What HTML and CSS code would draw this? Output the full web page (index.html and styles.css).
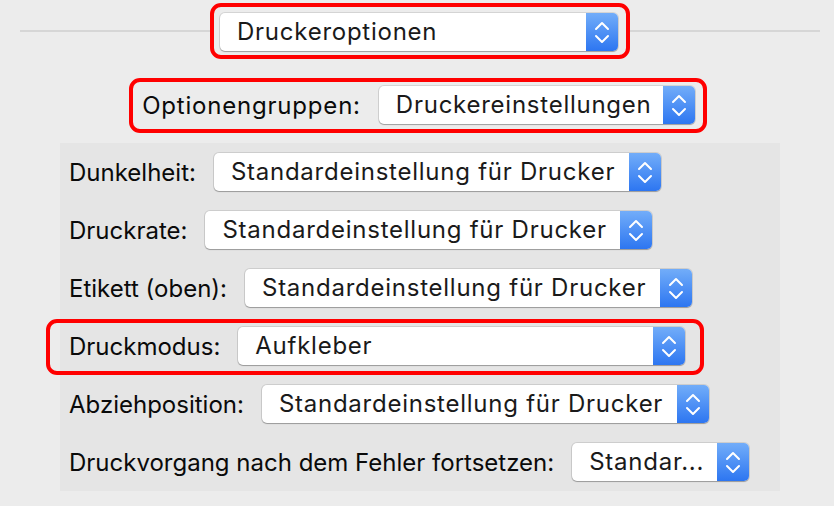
FILE: index.html
```html
<!DOCTYPE html>
<html lang="de">
<head>
    <meta charset="UTF-8">
    <meta name="viewport" content="width=device-width, initial-scale=1.0">
    <title>Druckeroptionen</title>
    <link rel="stylesheet" href="styles.css">
</head>
<body>

    <!-- Section selector over the divider line -->
    <div class="section-bar">
        <div class="marked marked-top">
            <div class="popup popup-section">
                <span class="popup-value">Druckeroptionen</span>
                <span class="popup-arrows"><svg viewBox="0 0 32 38"><polyline points="10,16 16,10 22,16"/><polyline points="10,23 16,29 22,23"/></svg></span>
            </div>
        </div>
    </div>

    <div class="group-row">
        <div class="marked marked-group">
            <span class="label label-group">Optionengruppen:</span>
            <div class="popup popup-group">
                <span class="popup-value">Druckereinstellungen</span>
                <span class="popup-arrows"><svg viewBox="0 0 32 38"><polyline points="10,16 16,10 22,16"/><polyline points="10,23 16,29 22,23"/></svg></span>
            </div>
        </div>
    </div>

    <div class="options-panel">
        <div class="option-row">
            <span class="label">Dunkelheit:</span>
            <div class="popup popup-std">
                <span class="popup-value">Standardeinstellung für Drucker</span>
                <span class="popup-arrows"><svg viewBox="0 0 32 38"><polyline points="10,16 16,10 22,16"/><polyline points="10,23 16,29 22,23"/></svg></span>
            </div>
        </div>

        <div class="option-row">
            <span class="label">Druckrate:</span>
            <div class="popup popup-std">
                <span class="popup-value">Standardeinstellung für Drucker</span>
                <span class="popup-arrows"><svg viewBox="0 0 32 38"><polyline points="10,16 16,10 22,16"/><polyline points="10,23 16,29 22,23"/></svg></span>
            </div>
        </div>

        <div class="option-row">
            <span class="label">Etikett (oben):</span>
            <div class="popup popup-std">
                <span class="popup-value">Standardeinstellung für Drucker</span>
                <span class="popup-arrows"><svg viewBox="0 0 32 38"><polyline points="10,16 16,10 22,16"/><polyline points="10,23 16,29 22,23"/></svg></span>
            </div>
        </div>

        <div class="option-row option-marked">
            <span class="label">Druckmodus:</span>
            <div class="popup popup-std">
                <span class="popup-value">Aufkleber</span>
                <span class="popup-arrows"><svg viewBox="0 0 32 38"><polyline points="10,16 16,10 22,16"/><polyline points="10,23 16,29 22,23"/></svg></span>
            </div>
        </div>

        <div class="option-row">
            <span class="label">Abziehposition:</span>
            <div class="popup popup-std">
                <span class="popup-value">Standardeinstellung für Drucker</span>
                <span class="popup-arrows"><svg viewBox="0 0 32 38"><polyline points="10,16 16,10 22,16"/><polyline points="10,23 16,29 22,23"/></svg></span>
            </div>
        </div>

        <div class="option-row">
            <span class="label">Druckvorgang nach dem Fehler fortsetzen:</span>
            <div class="popup popup-short">
                <span class="popup-value">Standar...</span>
                <span class="popup-arrows"><svg viewBox="0 0 32 38"><polyline points="10,16 16,10 22,16"/><polyline points="10,23 16,29 22,23"/></svg></span>
            </div>
        </div>
    </div>

</body>
</html>
```

FILE: styles.css
```css
/* Basic Reset */
* {
    margin: 0;
    padding: 0;
    box-sizing: border-box;
}

body {
    font-family: 'Inter', 'Liberation Sans', sans-serif;
    font-size: 24px;
    color: #111;
    background: #ececec;
    width: 834px;
    height: 506px;
    overflow: hidden;
}

/* Red annotation frames */
.marked {
    border: 4px solid #ff0000;
    border-radius: 11px;
    display: flex;
    align-items: center;
}

/* Top bar with divider line */
.section-bar {
    display: flex;
    align-items: center;
    padding: 3px 14px 0 20px;
}

.section-bar::before,
.section-bar::after {
    content: "";
    flex: 1;
    height: 2px;
    background: #d6d6d6;
    margin-top: -1px;
}

.marked-top {
    padding: 6px 8px 4px 6px;
}

.group-row {
    display: flex;
    justify-content: center;
    margin-top: 19px;
    padding-left: 2px;
}

.marked-group {
    padding: 4px 8px 5px 9px;
    gap: 18px;
}

/* Popup buttons */
.popup {
    display: flex;
    height: 38px;
    background: #fff;
    border-radius: 5px;
    box-shadow: 0 0 0 1px rgba(0, 0, 0, 0.1), 0 1px 1px rgba(0, 0, 0, 0.25);
    flex-shrink: 0;
}

.popup-value {
    flex: 1;
    padding-left: 17px;
    line-height: 38px;
    letter-spacing: 0.75px;
    white-space: nowrap;
    overflow: hidden;
    color: #1a1a1a;
}

.popup-arrows {
    width: 32px;
    border-radius: 0 5px 5px 0;
    background: linear-gradient(#72adf9, #2d76f1);
}

.popup-arrows svg {
    display: block;
    width: 32px;
    height: 38px;
    fill: none;
    stroke: #fff;
    stroke-width: 2;
    stroke-linecap: round;
    stroke-linejoin: round;
}

.popup-section { width: 398px; }
.popup-group   { width: 316px; }
.popup-std     { width: 447px; }
.popup-short   { width: 177px; }

.label {
    white-space: nowrap;
    color: #0a0a0a;
}

.label-group {
    letter-spacing: 0.8px;
}

/* Options panel */
.options-panel {
    margin: 10px 54px 0 60px;
    height: 348px;
    background: #e5e5e5;
    padding: 10px 0 0 9px;
    display: flex;
    flex-direction: column;
    align-items: flex-start;
    gap: 20px;
}

.option-row {
    display: flex;
    align-items: center;
    gap: 18px;
}

.option-marked {
    position: relative;
}

.option-marked::after {
    content: "";
    position: absolute;
    top: -8px;
    bottom: -10px;
    left: -23px;
    right: -19px;
    border: 4px solid #ff0000;
    border-radius: 11px;
}
```
